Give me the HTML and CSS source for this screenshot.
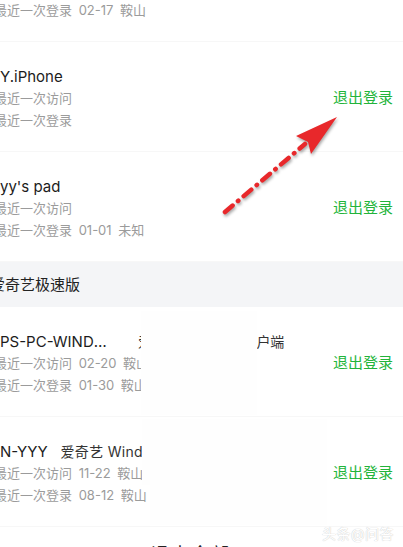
FILE: index.html
```html
<!DOCTYPE html>
<html lang="zh-CN">

<head>
    <meta charset="UTF-8">
    <meta name="viewport" content="width=device-width, initial-scale=1.0">
    <title>登录设备管理</title>
    <link rel="stylesheet" href="styles.css">
</head>

<body>
    <div class="screen">
        <div class="device">
            <div class="info">
                <div class="name-line"><span class="name">YYY-PC</span></div>
                <div class="meta">最近一次访问 02-17 鞍山</div>
                <div class="meta">最近一次登录 02-17 鞍山</div>
            </div>
            <a class="logout" href="#">退出登录</a>
        </div>

        <div class="device">
            <div class="info">
                <div class="name-line"><span class="name">Y.iPhone</span></div>
                <div class="meta">最近一次访问</div>
                <div class="meta">最近一次登录</div>
            </div>
            <a class="logout" href="#">退出登录</a>
        </div>

        <div class="device">
            <div class="info">
                <div class="name-line"><span class="name">yy's pad</span></div>
                <div class="meta">最近一次访问</div>
                <div class="meta">最近一次登录 01-01 未知</div>
            </div>
            <a class="logout" href="#">退出登录</a>
        </div>

        <div class="section-title">爱奇艺极速版</div>

        <div class="device">
            <div class="info">
                <div class="name-line">
                    <span class="name name-cut">PS-PC-WINDOWS10</span>
                    <span class="client client-far">爱奇艺 Windows客户端</span>
                </div>
                <div class="meta">最近一次访问 02-20 鞍山</div>
                <div class="meta">最近一次登录 01-30 鞍山</div>
            </div>
            <a class="logout" href="#">退出登录</a>
            <div class="mask mask-a"></div>
        </div>

        <div class="device">
            <div class="info">
                <div class="name-line">
                    <span class="name">N-YYY</span>
                    <span class="client">爱奇艺 Windows客户端</span>
                </div>
                <div class="meta">最近一次访问 11-22 鞍山</div>
                <div class="meta">最近一次登录 08-12 鞍山</div>
            </div>
            <a class="logout" href="#">退出登录</a>
            <div class="mask mask-b"></div>
            <div class="mask mask-c"></div>
        </div>

        <div class="logout-all">退出全部</div>
    </div>

    <svg class="arrow" width="403" height="547" viewBox="0 0 403 547">
        <line x1="225" y1="212" x2="305" y2="144" stroke="#e8282b" stroke-width="4.5"
            stroke-linecap="round" stroke-dasharray="10 7 0.5 7" />
        <polygon points="337,117 296,136 308,142 311,154" fill="#e8282b" />
    </svg>

    <div class="watermark">头条@问答</div>
</body>

</html>
```

FILE: styles.css
```css
body {
    margin: 0;
    width: 403px;
    height: 547px;
    overflow: hidden;
    background: #fff;
    font-family: Inter, "Noto Sans CJK SC", sans-serif;
    position: relative;
}

/* the shot is cropped: the real screen starts a bit to the left and above */
.screen {
    position: relative;
    width: 424px;
    margin-left: -21px;
    margin-top: -68px;
}

.device {
    position: relative;
    display: flex;
    align-items: center;
    justify-content: space-between;
    height: 109px;
    padding: 0 10px 0 15px;
    border-bottom: 1px solid #f7f7f7;
    background: #fff;
}

.info {
    display: flex;
    flex-direction: column;
    padding-top: 3px;
}

.name-line {
    display: flex;
    align-items: center;
    height: 22px;
    padding-left: 6px;
}

.name {
    font-size: 15px;
    color: #1c1c1c;
    white-space: nowrap;
}

.name-cut {
    display: inline-block;
    max-width: 117px;
    overflow: hidden;
    text-overflow: ellipsis;
}

.client {
    margin-left: 13px;
    font-size: 14px;
    letter-spacing: 0.3px;
    color: #333;
    white-space: nowrap;
}

.client-far {
    margin-left: 21px;
    letter-spacing: -0.2px;
}

.meta {
    font-size: 13px;
    line-height: 22px;
    word-spacing: 3px;
    color: #9b9b9b;
    white-space: nowrap;
}

.logout {
    font-size: 15px;
    color: #22b43a;
    text-decoration: none;
}

.section-title {
    height: 45px;
    line-height: 45px;
    padding-left: 11px;
    background: #f4f5f7;
    font-size: 15px;
    color: #222;
}

.logout-all {
    padding-top: 13px;
    text-align: center;
    font-size: 18px;
    letter-spacing: 2px;
    color: #222;
}

/* privacy blur boxes painted over the original shot */
.mask {
    position: absolute;
    background: #fefefe;
}

.mask-a {
    left: 162px;
    top: 4px;
    width: 116px;
    height: 104px;
}

.mask-b {
    left: 163px;
    top: 2px;
    width: 185px;
    height: 66px;
}

.mask-c {
    left: 171px;
    top: 68px;
    width: 177px;
    height: 40px;
}

.arrow {
    position: absolute;
    left: 0;
    top: 0;
    pointer-events: none;
    filter: drop-shadow(1px 2px 1.5px rgba(0, 0, 0, 0.35));
}

.watermark {
    position: absolute;
    left: 322px;
    top: 523px;
    font-size: 14px;
    color: #fff;
    text-shadow: 0 0 1px #ccc, 0 0 1px #d6d6d6;
    letter-spacing: 0.5px;
}
```
